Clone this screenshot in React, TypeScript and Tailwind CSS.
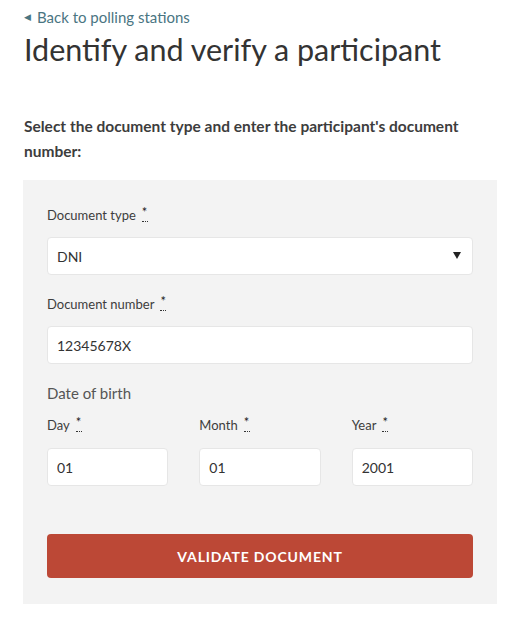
import React from "react";

const FONT = { fontFamily: "Lato, 'Noto Sans', sans-serif" };

function Required() {
  return (
    <span className="relative ml-1.5 inline-block align-top text-[13px] leading-[14px] text-[#222]">
      *
      <span className="absolute left-0 top-[16px] w-[6px] border-b border-dotted border-[#333]" />
    </span>
  );
}

function Label({ text }: { text: string }) {
  return (
    <label className="block text-[13px] leading-5 text-[#3d3d3d]">
      {text}
      <Required />
    </label>
  );
}

function TextInput({ value }: { value: string }) {
  return (
    <input
      readOnly
      value={value}
      className="h-[38px] w-full rounded-[4px] border border-[#e6e6e6] bg-white px-[9px] text-[14px] text-[#333] outline-none"
      style={FONT}
    />
  );
}

export default function App() {
  return (
    <div className="min-h-[619px] bg-white px-6 pt-[7px]" style={FONT}>
      <a href="#" className="flex items-center gap-1.5 text-[15px] leading-5 text-[#4a7582]">
        <span className="text-[9px]">◀</span>
        Back to polling stations
      </a>
      <h1 className="mt-[4px] text-[30.5px] leading-9 font-normal text-[#333]">
        Identify and verify a participant
      </h1>

      <p className="mt-[47px] text-[15.5px] font-bold leading-[25px] text-[#3d3d3d]">
        Select the document type and enter the participant's document number:
      </p>

      <div className="-ml-px mt-[16px] w-[474px] bg-[#f3f3f3] px-6 pb-[26px] pt-[25px]">
        <Label text="Document type" />
        <div className="relative mt-3">
          <div className="flex h-[38px] items-center rounded-[4px] border border-[#e6e6e6] bg-white px-[9px] text-[14px] text-[#333]">
            DNI
          </div>
          <span className="absolute right-[12px] top-[15px] h-0 w-0 border-x-[4.5px] border-t-[7px] border-x-transparent border-t-[#222]" />
        </div>

        <div className="mt-[19px]">
          <Label text="Document number" />
        </div>
        <div className="mt-3">
          <TextInput value="12345678X" />
        </div>

        <p className="mt-[19px] text-[15px] leading-5 text-[#555]">Date of birth</p>

        <div className="mt-3 grid grid-cols-3 gap-[31px]">
          {[
            ["Day", "01"],
            ["Month", "01"],
            ["Year", "2001"],
          ].map(([label, value]) => (
            <div key={label}>
              <Label text={label} />
              <div className="mt-[13px]">
                <TextInput value={value} />
              </div>
            </div>
          ))}
        </div>

        <button className="mt-12 flex h-[44px] w-full items-center justify-center rounded-[4px] bg-[#bc4836] text-[14px] font-bold uppercase tracking-[0.06em] text-white">
          Validate document
        </button>
      </div>
    </div>
  );
}
